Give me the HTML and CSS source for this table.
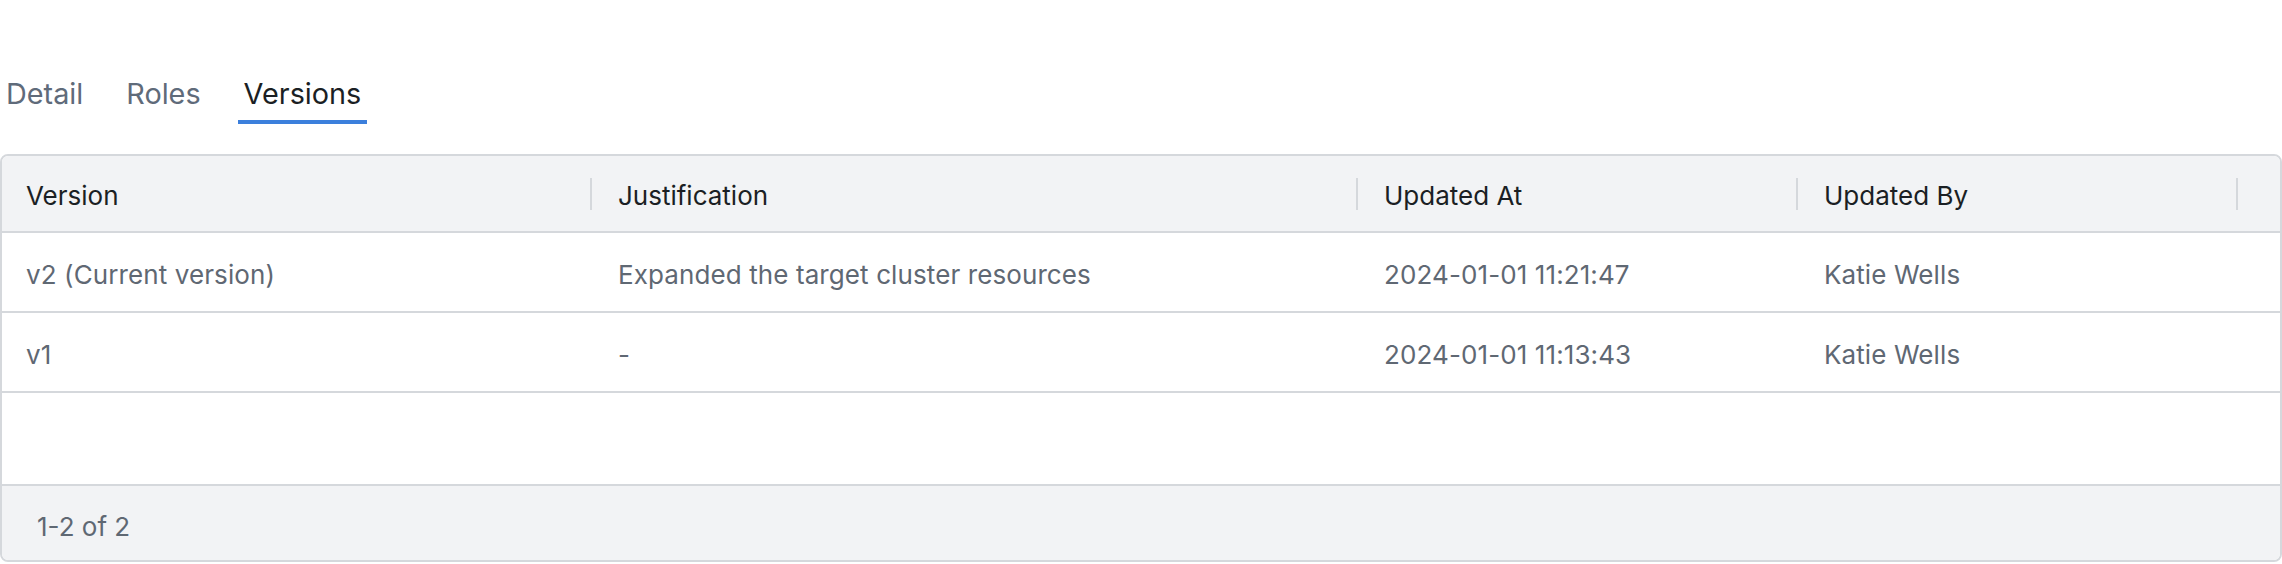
FILE: index.html
```html
<!DOCTYPE html>
<html lang="en">
<head>
<meta charset="utf-8">
<title>Versions</title>
<link rel="stylesheet" href="styles.css">
</head>
<body>
<div class="page">
  <nav class="tabs">
    <div class="tab">Detail</div>
    <div class="tab">Roles</div>
    <div class="tab active">Versions</div>
  </nav>
  <div class="table">
    <div class="thead">
      <div class="th c1">Version</div>
      <div class="th">Justification</div>
      <div class="th">Updated At</div>
      <div class="th">Updated By</div>
      <div class="th last"></div>
    </div>
    <div class="tbody">
      <div class="tr">
        <div class="td c1">v2 (Current version)</div>
        <div class="td">Expanded the target cluster resources</div>
        <div class="td">2024-01-01 11:21:47</div>
        <div class="td">Katie Wells</div>
        <div class="td"></div>
      </div>
      <div class="tr">
        <div class="td c1">v1</div>
        <div class="td">-</div>
        <div class="td">2024-01-01 11:13:43</div>
        <div class="td">Katie Wells</div>
        <div class="td"></div>
      </div>
    </div>
    <div class="tfoot">1-2 of 2</div>
  </div>
</div>
</body>
</html>
```
FILE: styles.css
```css
html, body {
  margin: 0;
  padding: 0;
  background: #ffffff;
}
body {
  font-family: Inter, "Noto Sans", sans-serif;
  color: #1b1f24;
}
.page {
  padding-top: 75px;
}
.tabs {
  display: flex;
  gap: 31px;
  margin-bottom: 30px;
}
.tab {
  font-size: 28.8px;
  line-height: 35px;
  padding: 1px 6px 9px;
  border-bottom: 4px solid transparent;
  color: #5f6b7a;
}
.tab.active {
  color: #1b1f24;
  border-bottom-color: #3b7fdc;
}
.table {
  border: 2px solid #d5d8dc;
  border-radius: 8px;
  overflow: hidden;
  font-size: 26px;
}
.thead, .tr {
  display: grid;
  grid-template-columns: 590px 766px 440px 440px 1fr;
  align-items: center;
}
.thead {
  height: 75px;
  background: #f2f3f5;
  border-bottom: 2px solid #d5d8dc;
}
.th {
  position: relative;
  padding-left: 26px;
  padding-top: 3px;
  box-sizing: border-box;
  height: 75px;
  display: flex;
  align-items: center;
  color: #1b1f24;
}
.th.c1, .td.c1 {
  padding-left: 24px;
}
.th:not(.last)::after {
  content: "";
  position: absolute;
  right: 0;
  top: 22px;
  width: 2px;
  height: 32px;
  background: #d5d8dc;
}
.tbody {
  min-height: 251px;
}
.tr {
  height: 78px;
  border-bottom: 2px solid #d5d8dc;
}
.td {
  padding-left: 26px;
  padding-top: 4px;
  color: #5f6873;
  white-space: nowrap;
  letter-spacing: 0.1px;
}
.tfoot {
  border-top: 2px solid #d5d8dc;
  background: #f2f3f5;
  height: 76px;
  box-sizing: border-box;
  padding-top: 7px;
  display: flex;
  align-items: center;
  padding-left: 35px;
  color: #5f6873;
}
```
